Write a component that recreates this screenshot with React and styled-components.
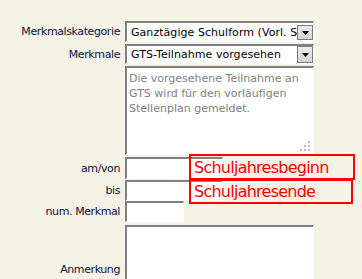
import React from "react";
import styled, { createGlobalStyle, css } from "styled-components";

const GlobalStyle = createGlobalStyle`
  html, body {
    margin: 0;
    padding: 0;
    overflow: hidden;
    background: #f5f2e6;
  }
  body {
    font-family: "DejaVu Sans", Verdana, sans-serif;
  }
`;

const Page = styled.div`
  width: 362px;
  height: 279px;
  box-sizing: border-box;
  padding-top: 21px;
  overflow: hidden;
  background: #f5f2e6;
`;

const Form = styled.div`
  display: flex;
  flex-direction: column;
`;

const Row = styled.div`
  position: relative;
  display: grid;
  grid-template-columns: 120px auto;
  column-gap: 5px;
  align-items: center;
  height: ${(p) => p.$h}px;
  margin-top: ${(p) => p.$gap || 0}px;
`;

const Label = styled.div`
  text-align: right;
  font-size: 11px;
  letter-spacing: -0.4px;
  color: #101038;
  white-space: nowrap;
`;

const sunken = css`
  box-sizing: border-box;
  border-style: solid;
  border-width: 2px 1px 1px 2px;
  border-color: #808080 #ffffff #ffffff #808080;
  background: #ffffff;
`;

const SelectBox = styled.div`
  ${sunken};
  width: 189px;
  height: ${(p) => p.$h}px;
  display: flex;
  align-items: ${(p) => (p.$low ? "flex-end" : "center")};
  overflow: hidden;
`;

const SelectText = styled.div`
  flex: 1;
  align-self: center;
  padding-left: 4px;
  font-size: 11px;
  letter-spacing: 0.05px;
  color: #000;
  white-space: nowrap;
  overflow: hidden;
`;

const DropButton = styled.div`
  flex: none;
  box-sizing: border-box;
  width: 16px;
  height: ${(p) => p.$h}px;
  margin-bottom: ${(p) => (p.$low ? 1 : 0)}px;
  border: 1px solid #7a7a7a;
  background: linear-gradient(#ececec, #d4d4d4);
  display: flex;
  align-items: center;
  justify-content: center;
`;

const TextArea = styled.div`
  ${sunken};
  position: relative;
  width: 189px;
  height: ${(p) => p.$h}px;
  padding: 3px 2px;
  font-size: 11px;
  letter-spacing: 0;
  line-height: 15px;
  color: #808080;
  align-self: start;
`;

const Grip = styled.svg`
  position: absolute;
  right: 3px;
  bottom: 3px;
`;

const Input = styled.div`
  ${sunken};
  width: ${(p) => p.$w}px;
  height: ${(p) => p.$h}px;
`;

const Note = styled.div`
  position: absolute;
  left: 189px;
  top: ${(p) => p.$top}px;
  width: ${(p) => p.$w}px;
  height: ${(p) => p.$h}px;
  box-sizing: border-box;
  border: 2px solid #ff0000;
  padding-left: 3px;
  display: flex;
  align-items: center;
  font-size: 16px;
  letter-spacing: -0.75px;
  color: #ff0000;
  white-space: nowrap;
`;

const Arrow = () => (
  <svg width="7" height="4" viewBox="0 0 7 4">
    <polygon points="0,0 7,0 3.5,4" fill="#000" />
  </svg>
);

const ResizeGrip = () => (
  <Grip width="10" height="10" viewBox="0 0 10 10">
    {[
      [8, 0],
      [4, 4],
      [8, 4],
      [0, 8],
      [4, 8],
      [8, 8],
    ].map(([x, y]) => (
      <rect key={`${x}-${y}`} x={x} y={y} width="2" height="2" fill="#b8b8b8" />
    ))}
  </Grip>
);

export default function App() {
  return (
    <>
      <GlobalStyle />
      <Page>
        <Form>
          <Row $h={21}>
            <Label>Merkmalskategorie</Label>
            <SelectBox $h={21} $low>
              <SelectText>Ganztägige Schulform (Vorl. Stellenplan)</SelectText>
              <DropButton $h={15} $low>
                <Arrow />
              </DropButton>
            </SelectBox>
          </Row>
          <Row $h={20} $gap={2}>
            <Label>Merkmale</Label>
            <SelectBox $h={20}>
              <SelectText>GTS-Teilnahme vorgesehen</SelectText>
              <DropButton $h={17}>
                <Arrow />
              </DropButton>
            </SelectBox>
          </Row>
          <Row $h={89} $gap={2}>
            <div />
            <TextArea $h={89}>
              Die vorgesehene Teilnahme an GTS wird für den vorläufigen
              Stellenplan gemeldet.
              <ResizeGrip />
            </TextArea>
          </Row>
          <Row $h={22} $gap={2}>
            <Label>am/von</Label>
            <Input $w={98} $h={22} />
            <Note $top={-3} $w={166} $h={26}>
              Schuljahresbeginn
            </Note>
          </Row>
          <Row $h={21} $gap={1}>
            <Label>bis</Label>
            <Input $w={98} $h={21} />
            <Note $top={-1} $w={164} $h={25}>
              Schuljahresende
            </Note>
          </Row>
          <Row $h={21}>
            <Label>num. Merkmal</Label>
            <Input $w={59} $h={21} />
          </Row>
          <Row $h={88} $gap={3}>
            <Label>Anmerkung</Label>
            <Input $w={189} $h={88} />
          </Row>
        </Form>
      </Page>
    </>
  );
}
